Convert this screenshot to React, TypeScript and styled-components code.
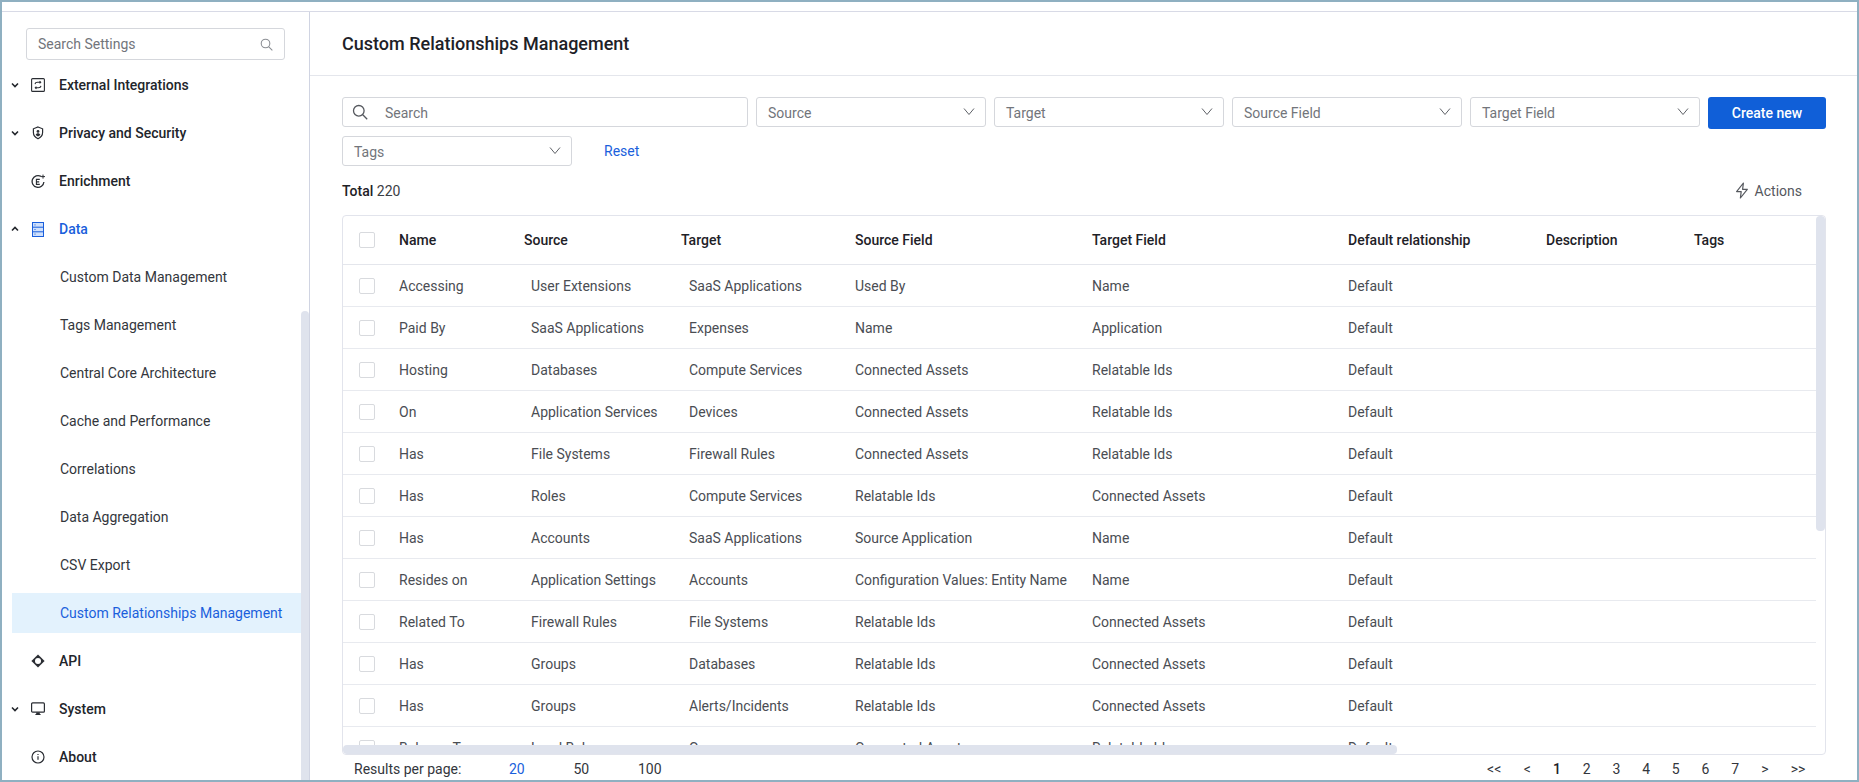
import React from "react";
import styled, { createGlobalStyle } from "styled-components";

const Global = createGlobalStyle`
  html, body { margin: 0; padding: 0; background: #fff; }
  body { font-family: Roboto, "Liberation Sans", sans-serif; overflow: hidden; }
  * { box-sizing: border-box; }
`;

const Frame = styled.div`
  width: 1859px; height: 782px; border: 2px solid #8fb0c1; display: flex; flex-direction: column; background: #fff; overflow: hidden;
`;
const TopStrip = styled.div`
  height: 10px; flex: none; border-bottom: 1px solid #d8dae6;
`;
const Body = styled.div`
  flex: 1; display: flex; min-height: 0;
`;
const Sidebar = styled.aside`
  width: 308px; flex: none; border-right: 1px solid #d0d4e2; position: relative; overflow: hidden; padding-top: 16px;
`;
const SideSearch = styled.div`
  margin: 0 0 0 24px; width: 259px; height: 32px; border: 1px solid #d5d7dc; border-radius: 3px; display: flex; align-items: center; justify-content: space-between; padding: 0 11px 0 11px;
  font-size: 14px; color: #72757b;
  svg { color: #8a8d93; }
`;
const Nav = styled.nav`
  display: flex; flex-direction: column; margin-top: 1px;
`;
const NavRow = styled.div<{ $active?: boolean }>`
  height: 48px; display: flex; align-items: center; font-size: 14px; font-weight: 500; color: ${p => (p.$active ? "#1a5fdc" : "#22252b")};
`;
const Caret = styled.span`
  width: 26px; flex: none; display: flex; justify-content: center; color: #22252b;
`;
const NavIcon = styled.span`
  width: 31px; flex: none; display: flex; justify-content: center; padding-right: 11px;
`;
const SubRow = styled.div<{ $active?: boolean }>`
  height: ${p => (p.$active ? "40px" : "48px")}; margin: ${p => (p.$active ? "4px 0 4px 10px" : "0 0 0 10px")}; padding-left: 48px; display: flex; align-items: center; font-size: 14px; color: ${p => (p.$active ? "#1a5fdc" : "#33363c")};
  background: ${p => (p.$active ? "#e3f2fd" : "transparent")};
`;
const SideScroll = styled.div`
  position: absolute; right: 0; top: 299px; bottom: 0; width: 8px; background: #dfe3ed; border-radius: 4px 4px 0 0;
`;

const Main = styled.main`
  flex: 1; min-width: 0; display: flex; flex-direction: column;
`;
const Header = styled.header`
  height: 64px; flex: none; border-bottom: 1px solid #e4e6ec; display: flex; align-items: center; padding: 0 31px 0 32px; font-size: 18px; font-weight: 500; color: #1e2127;
`;
const Content = styled.div`
  flex: 1; min-height: 0; display: flex; flex-direction: column; padding: 21px 31px 0 32px;
`;
const Filters = styled.div`
  display: flex; flex-wrap: wrap; gap: 7px 8px; align-items: flex-start;
`;
const SearchBox = styled.div`
  width: 406px; height: 30px; border: 1px solid #d5d7dc; border-radius: 3px; display: flex; align-items: center; gap: 17px; padding-left: 9px; font-size: 14px; color: #72757b;
  span { padding-top: 1px; }
  svg { color: #55585e; }
`;
const Select = styled.div`
  width: 230px; height: 30px; border: 1px solid #d5d7dc; border-radius: 3px; display: flex; align-items: center; justify-content: space-between; padding: 0 8px 0 11px; font-size: 14px; color: #72757b;
  span { padding-top: 1px; }
  svg { color: #5f6268; }
`;
const Create = styled.button`
  width: 118px; height: 32px; border: 0; border-radius: 3px; background: #105fd8; color: #fff; font: 500 14px Roboto, sans-serif; padding: 0;
`;
const Reset = styled.a`
  font-size: 14px; color: #1a5fdc; margin-left: 24px; line-height: 30px; width: 60px; text-align: left;
`;
const TotalRow = styled.div`
  height: 49px; flex: none; display: flex; align-items: center; justify-content: space-between; padding-right: 24px; font-size: 14px; color: #3b3e44;
  b { font-weight: 500; color: #1e2127; }
`;
const Actions = styled.div`
  display: flex; align-items: center; gap: 6px; color: #55585e;
`;
const TableBox = styled.div`
  height: 540px; flex: none; border: 1px solid #e2e4ec; border-radius: 4px; position: relative; overflow: hidden;
`;
const columns = "56px 125px 157px 174px 237px 256px 198px 148px 1fr";
const HeadRow = styled.div`
  display: grid; grid-template-columns: ${columns}; height: 49px; align-items: center; margin-right: 9px; border-bottom: 1px solid #e4e6ec; font-size: 14px; font-weight: 500; color: #1e2127;
`;
const Row = styled.div`
  display: grid; grid-template-columns: ${columns}; height: 42px; align-items: center; margin-right: 9px; border-bottom: 1px solid #e8eaef; font-size: 14px; color: #4a4d53;
`;
const Check = styled.span`
  display: block; width: 16px; height: 16px; margin-left: 16px; border: 1px solid #d8dade; border-radius: 2px; background: #fff;
`;
const Inset = styled.span<{ $pad: number }>`
  padding-left: ${p => p.$pad}px; white-space: nowrap;
`;
const Cell = styled.span`
  white-space: nowrap;
`;
const VScroll = styled.div`
  position: absolute; right: 0; top: 0; width: 9px; height: 315px; background: #dfe3ed; border-radius: 4px;
`;
const HScroll = styled.div`
  position: absolute; left: 0; bottom: 0; width: 1054px; height: 9px; background: #dfe3ed; border-radius: 4px;
`;
const Footer = styled.div`
  flex: 1; display: flex; align-items: center; justify-content: space-between; padding-top: 3px; font-size: 14px; color: #33363c;
`;
const PerPage = styled.div`
  display: flex; align-items: center; padding-left: 12px;
`;
const PerLabel = styled.span`
  width: 155px;
`;
const PerOption = styled.span<{ $active?: boolean }>`
  width: 64.5px; color: ${p => (p.$active ? "#1a5fdc" : "#33363c")};
`;
const Pager = styled.div`
  display: flex; align-items: center; padding-right: 10px;
`;
const Page = styled.span<{ $current?: boolean; $w?: number }>`
  width: ${p => p.$w ?? 29.7}px; text-align: center; font-weight: ${p => (p.$current ? 500 : 400)}; color: ${p => (p.$current ? "#1e2127" : "#33363c")};
`;

const Chevron = () => (
  <svg width="16" height="16" viewBox="0 0 16 16" fill="none" stroke="currentColor" strokeWidth="1"><path d="M3 4.5 8 10.5l5-6" /></svg>
);
const Small = ({ up }: { up?: boolean }) => (
  <svg width="10" height="10" viewBox="0 0 10 10" fill="none" stroke="currentColor" strokeWidth="1.6"><path d={up ? "M2 6.5 5 3.5l3 3" : "M2 3.5 5 6.5l3-3"} /></svg>
);
const Loupe = ({ size = 14 }: { size?: number }) => (
  <svg width={size} height={size} viewBox="0 0 16 16" fill="none" stroke="currentColor" strokeWidth="1.3"><circle cx="6.8" cy="6.8" r="5.3" /><path d="m10.8 10.8 4.4 4.4" /></svg>
);
const Sync = () => (
  <svg width="14" height="14" viewBox="0 0 14 14" fill="none" stroke="#2a2d33" strokeWidth="1.1"><rect x=".6" y=".6" width="12.8" height="12.8" rx="1" /><path d="M4 6.2c.2-1.2 1-1.9 2.4-1.9h3.2M8.6 3.2l1.1 1.1-1.1 1.1M10 7.8c-.2 1.2-1 1.9-2.4 1.9H4.4M5.4 8.6 4.3 9.7l1.1 1.1" /></svg>
);
const Shield = () => (
  <svg width="14" height="14" viewBox="0 0 14 14" fill="none" stroke="#2a2d33" strokeWidth="1.2"><path d="M7 1 11.6 2.8v3.8c0 3-2 5-4.6 6.2C4.4 11.6 2.4 9.6 2.4 6.6V2.8z" /><circle cx="7" cy="5.4" r="1.4" fill="#2a2d33" stroke="none" /><path d="M4.6 9c.4-1.3 1.3-1.8 2.4-1.8s2 .5 2.4 1.8L7 10.6z" fill="#2a2d33" stroke="none" /></svg>
);
const Enrich = () => (
  <svg width="15" height="15" viewBox="0 0 15 15" fill="none" stroke="#2a2d33"><path d="M10 2.400A5.900 5.900 0 1 0 12.900 8" strokeWidth="1.300" /><path d="M8.800 5.400H5.400v5h3.400M5.400 7.900h2.800" strokeWidth="1.100" /><path d="M12 .6v4M10 2.600h4" strokeWidth="1" /></svg>
);
const DataIcon = () => (
  <svg width="12" height="15" viewBox="0 0 12 15" fill="#cfe0fb" stroke="#1a5fdc" strokeWidth="1"><rect x=".5" y=".5" width="11" height="14" /><path d="M.5 5.200h11M.5 9.800h11" /><path d="M2.500 2.900h1M2.500 7.500h1M2.500 12.100h1" /></svg>
);
const Api = () => (
  <svg width="14" height="14" viewBox="0 0 14 14" fill="none"><path d="M7 .4 13.600 7 7 13.600.4 7z" fill="#2a2d33" /><circle cx="7" cy="7" r="3" fill="#fff" /></svg>
);
const Monitor = () => (
  <svg width="14" height="14" viewBox="0 0 14 14" fill="none" stroke="#2a2d33" strokeWidth="1.200"><rect x=".6" y=".9" width="12.800" height="9.300" rx="1" /><path d="M5.200 10.400h3.600v1.600H5.200z" fill="#2a2d33" stroke="none" /><path d="M4.400 12.500h5.200" strokeWidth="1" /></svg>
);
const Info = () => (
  <svg width="14" height="14" viewBox="0 0 14 14" fill="none" stroke="#2a2d33" strokeWidth="1.200"><circle cx="7" cy="7" r="6" /><path d="M7 6.300v3.400" /><path d="M7 4v1.100" /></svg>
);
const Bolt = () => (
  <svg width="14" height="17" viewBox="0 0 14 17" fill="none" stroke="currentColor" strokeWidth="1.200" strokeLinejoin="round"><path d="M8.400 1 1.600 9.600h4.600L5.400 16l6.900-8.700H7.600z" /></svg>
);

const rows: [string, string, string, string, string][] = [
  ["Accessing", "User Extensions", "SaaS Applications", "Used By", "Name"],
  ["Paid By", "SaaS Applications", "Expenses", "Name", "Application"],
  ["Hosting", "Databases", "Compute Services", "Connected Assets", "Relatable Ids"],
  ["On", "Application Services", "Devices", "Connected Assets", "Relatable Ids"],
  ["Has", "File Systems", "Firewall Rules", "Connected Assets", "Relatable Ids"],
  ["Has", "Roles", "Compute Services", "Relatable Ids", "Connected Assets"],
  ["Has", "Accounts", "SaaS Applications", "Source Application", "Name"],
  ["Resides on", "Application Settings", "Accounts", "Configuration Values: Entity Name", "Name"],
  ["Related To", "Firewall Rules", "File Systems", "Relatable Ids", "Connected Assets"],
  ["Has", "Groups", "Databases", "Relatable Ids", "Connected Assets"],
  ["Has", "Groups", "Alerts/Incidents", "Relatable Ids", "Connected Assets"],
  ["Belongs To", "Load Balancers", "Groups", "Connected Assets", "Relatable Ids"],
];

const subs = ["Custom Data Management", "Tags Management", "Central Core Architecture", "Cache and Performance", "Correlations", "Data Aggregation", "CSV Export"];
const selects = ["Source", "Target", "Source Field", "Target Field"];

export default function App() {
  return (
    <Frame>
      <Global />
      <TopStrip />
      <Body>
        <Sidebar>
          <SideSearch>Search Settings<Loupe size={13} /></SideSearch>
          <Nav>
            <NavRow><Caret><Small /></Caret><NavIcon><Sync /></NavIcon>External Integrations</NavRow>
            <NavRow><Caret><Small /></Caret><NavIcon><Shield /></NavIcon>Privacy and Security</NavRow>
            <NavRow><Caret /><NavIcon><Enrich /></NavIcon>Enrichment</NavRow>
            <NavRow $active><Caret><Small up /></Caret><NavIcon><DataIcon /></NavIcon>Data</NavRow>
            {subs.map(s => <SubRow key={s}>{s}</SubRow>)}
            <SubRow $active>Custom Relationships Management</SubRow>
            <NavRow><Caret /><NavIcon><Api /></NavIcon>API</NavRow>
            <NavRow><Caret><Small /></Caret><NavIcon><Monitor /></NavIcon>System</NavRow>
            <NavRow><Caret /><NavIcon><Info /></NavIcon>About</NavRow>
          </Nav>
          <SideScroll />
        </Sidebar>
        <Main>
          <Header>Custom Relationships Management</Header>
          <Content>
            <Filters>
              <SearchBox><Loupe size={16} /><span>Search</span></SearchBox>
              {selects.map(s => <Select key={s}><span>{s}</span><Chevron /></Select>)}
              <Create>Create new</Create>
              <Select><span>Tags</span><Chevron /></Select>
              <Reset>Reset</Reset>
            </Filters>
            <TotalRow>
              <span><b>Total</b> 220</span>
              <Actions><Bolt />Actions</Actions>
            </TotalRow>
            <TableBox>
              <HeadRow>
                <Check />
                <Cell>Name</Cell><Cell>Source</Cell><Cell>Target</Cell><Cell>Source Field</Cell><Cell>Target Field</Cell><Cell>Default relationship</Cell><Cell>Description</Cell><Cell>Tags</Cell>
              </HeadRow>
              {rows.map((r, i) => (
                <Row key={i}>
                  <Check />
                  <Cell>{r[0]}</Cell><Inset $pad={7}>{r[1]}</Inset><Inset $pad={8}>{r[2]}</Inset><Cell>{r[3]}</Cell><Cell>{r[4]}</Cell><Cell>Default</Cell>
                </Row>
              ))}
              <VScroll />
              <HScroll />
            </TableBox>
            <Footer>
              <PerPage>
                <PerLabel>Results per page:</PerLabel>
                <PerOption $active>20</PerOption>
                <PerOption>50</PerOption>
                <PerOption>100</PerOption>
              </PerPage>
              <Pager>
                <Page $w={36}>&lt;&lt;</Page>
                <Page $w={30}>&lt;</Page>
                {[1, 2, 3, 4, 5, 6, 7].map(n => <Page key={n} $current={n === 1}>{n}</Page>)}
                <Page $w={30}>&gt;</Page>
                <Page $w={36}>&gt;&gt;</Page>
              </Pager>
            </Footer>
          </Content>
        </Main>
      </Body>
    </Frame>
  );
}
